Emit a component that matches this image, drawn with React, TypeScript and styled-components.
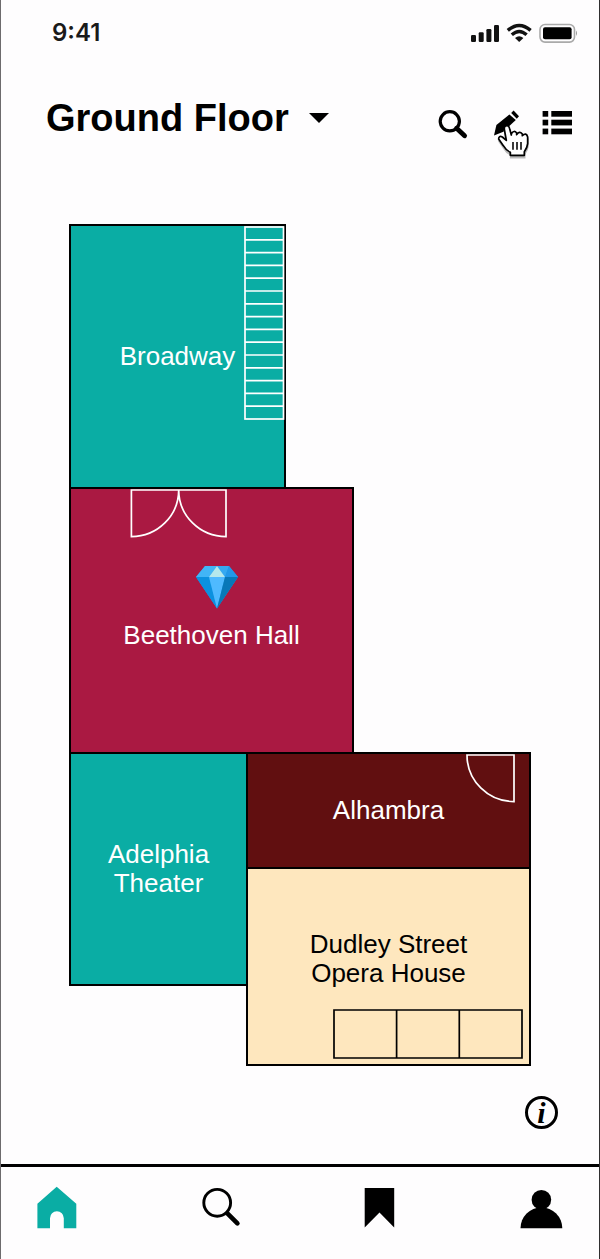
import React from "react";
import styled, { createGlobalStyle } from "styled-components";

const color = {
  paper: "#fefdfe",
  ink: "#000000",
  teal: "#0aada4",
  crimson: "#aa1942",
  maroon: "#610f10",
  cream: "#fee7be",
  white: "#ffffff",
};

const GlobalStyle = createGlobalStyle`
  *, *::before, *::after { box-sizing: border-box; }
  body {
    margin: 0;
    background: ${color.paper};
    color: ${color.ink};
    font-family: "Liberation Sans", Arial, Helvetica, sans-serif;
  }
  button, select { font: inherit; color: inherit; }
  svg { display: block; }
`;

const Screen = styled.div`
  min-height: 100vh;
  display: flex;
  flex-direction: column;
  border-left: 1px solid #6d6b6d;
  border-right: 1px solid #2f2f2f;
  background: ${color.paper};
`;

const StatusBar = styled.div`
  display: flex;
  justify-content: space-between;
  align-items: center;
  height: 66px;
  padding: 0 21px 0 51px;
`;

const Clock = styled.time`
  font-family: Inter, "Liberation Sans", sans-serif;
  font-size: 24px;
  font-weight: 600;
  line-height: 28px;
  color: #1a1a1a;
`;

const Header = styled.header`
  display: flex;
  justify-content: space-between;
  align-items: flex-start;
  padding: 37px 22px 82px 45px;
`;

const FloorPicker = styled.label`
  display: flex;
  align-items: center;
  gap: 20px;
`;

const FloorSelect = styled.select`
  appearance: none;
  margin: 0;
  padding: 0;
  border: 0;
  background: transparent;
  font-size: 38px;
  font-weight: 700;
  line-height: 30px;
  height: 30px;
  overflow: visible;
`;

const Tools = styled.div`
  display: flex;
  gap: 12px;
`;

const IconButton = styled.button<{ $size: number; $tint?: string }>`
  position: relative;
  width: ${(p) => p.$size}px;
  height: ${(p) => p.$size}px;
  padding: 0;
  border: 0;
  background: none;
  color: ${(p) => p.$tint ?? color.ink};
`;

const Pointer = styled.svg`
  position: absolute;
  left: 11px;
  top: 20px;
  pointer-events: none;
`;

const FloorPlan = styled.main`
  display: grid;
  grid-template-columns: 177fr 38fr 68fr 177fr;
  grid-template-rows: 263px 265px 115px 117px 80px;
  margin: 0 69px;
`;

const Room = styled.button<{ $area: string; $fill: string; $text?: string; $foot?: number }>`
  position: relative;
  grid-area: ${(p) => p.$area};
  display: flex;
  flex-direction: column;
  align-items: center;
  justify-content: center;
  gap: 12px;
  padding: 0 0 ${(p) => p.$foot ?? 0}px;
  border: 0;
  outline: 2px solid ${color.ink};
  outline-offset: -1px;
  background: ${(p) => p.$fill};
  color: ${(p) => p.$text ?? color.white};
  font-size: 26px;
  line-height: 29px;
`;

const Fixture = styled.svg<{ $top?: number; $bottom?: number; $left?: number; $right?: number }>`
  position: absolute;
  top: ${(p) => (p.$top === undefined ? "auto" : `${p.$top}px`)};
  bottom: ${(p) => (p.$bottom === undefined ? "auto" : `${p.$bottom}px`)};
  left: ${(p) => (p.$left === undefined ? "auto" : `${p.$left}px`)};
  right: ${(p) => (p.$right === undefined ? "auto" : `${p.$right}px`)};
  fill: none;
  stroke: currentColor;
  stroke-width: 1.7;
`;

const GemSlot = styled.span`
  padding-left: 11px;
`;

const InfoRow = styled.div`
  display: flex;
  justify-content: flex-end;
  padding: 31px 41px 35px;
`;

const InfoButton = styled.button`
  display: flex;
  align-items: center;
  justify-content: center;
  width: 33px;
  height: 33px;
  padding: 0;
  border: 3px solid ${color.ink};
  border-radius: 50%;
  background: none;
  font-family: "Liberation Serif", "Times New Roman", serif;
  font-size: 30px;
  font-style: italic;
  font-weight: 700;
  line-height: 27px;
`;

const TabBar = styled.nav`
  display: flex;
  justify-content: space-between;
  margin-top: auto;
  padding: 17px 34px 27px 32px;
  border-top: 3px solid ${color.ink};
`;

const StatusIcons = () => (
  <svg width="108" height="20" viewBox="0 0 108 20" aria-hidden="true">
    <g fill="#111">
      <rect x="1" y="12" width="5" height="7" rx="1.2" />
      <rect x="8.7" y="9.2" width="5" height="9.8" rx="1.2" />
      <rect x="16.4" y="6" width="5" height="13" rx="1.2" />
      <rect x="24" y="2" width="5" height="17" rx="1.2" />
    </g>
    <g fill="none" stroke="#111" strokeWidth="3.4">
      <path d="M37.8 7.4Q49.2-2.6 60.6 7.4" />
      <path d="M41.8 11.8Q49.2 5.2 56.6 11.8" />
    </g>
    <path d="M45 15Q49.2 11.4 53.4 15L49.2 19Z" fill="#111" />
    <rect x="70" y="1.5" width="34.5" height="17.6" rx="5" fill="none" stroke="#aaa" strokeWidth="1.6" />
    <rect x="73" y="4.3" width="28.6" height="12" rx="2" fill="#000" />
    <path d="M106 7.6Q108 10.3 106 13Z" fill="#999" />
  </svg>
);

const ToolSearch = () => (
  <svg width="40" height="40" viewBox="0 0 40 40" fill="none" stroke="currentColor">
    <circle cx="16.8" cy="18.3" r="9.6" strokeWidth="3.2" />
    <path d="M23.6 25.2L31.6 32.8" strokeWidth="4.8" strokeLinecap="round" />
  </svg>
);

const ToolPencil = () => (
  <svg width="40" height="40" viewBox="0 0 40 40" fill="currentColor">
    <path d="M9 32.4L11.4 21.9L24.4 11.4L30.8 17L18.4 28.7Z" />
    <path d="M26.2 10L28.6 7.6L34 13.2L31.8 15.8Z" />
  </svg>
);

const ToolList = () => (
  <svg width="40" height="40" viewBox="0 0 40 40" fill="currentColor">
    {[8, 16.7, 25.6].map((y) => (
      <React.Fragment key={y}>
        <rect x="5.6" y={y} width="5.6" height="5.7" />
        <rect x="14.3" y={y} width="20.7" height="5.7" />
      </React.Fragment>
    ))}
  </svg>
);

const HAND =
  "M31 52L25 19Q24 8 33 8Q39 8 41 17L46 36V32Q54 20 62 30V35Q70 22 79 33V38Q91 27 95 42V62Q94 74 85 86V97H43V88Q30 82 22 68L8 48Q8 37 19 42Z";

const HandPointer = () => (
  <Pointer width="34" height="38" viewBox="0 0 102 114" aria-hidden="true">
    <path d={HAND} transform="translate(1 7)" fill="#aaa" stroke="#bbb" strokeWidth="5" />
    <path d={HAND} fill="#fff" stroke="#000" strokeWidth="5.2" strokeLinejoin="round" />
    <path d="M51 57V80M63 57V80M75 57V80" stroke="#000" strokeWidth="4.6" />
  </Pointer>
);

const Gem = () => (
  <svg width="44" height="44" viewBox="0 0 44 44" aria-hidden="true">
    <path d="M10 1H34L43 12L22 43.5L1 12Z" fill="#1b9be8" />
    <path d="M10 1L22 1L14 12H1Z" fill="#42b5f6" />
    <path d="M22 1H34L30 12Z" fill="#35a9f1" />
    <path d="M34 1L43 12H30Z" fill="#2298e8" />
    <path d="M22 1L30 12H14Z" fill="#b5e8ec" />
    <path d="M1 12H14L22 43.5Z" fill="#0c91df" />
    <path d="M14 12H30L22 43.5Z" fill="#4fbaff" />
    <path d="M30 12H43L22 43.5Z" fill="#0878b8" />
  </svg>
);

const TabHome = () => (
  <svg width="48" height="48" viewBox="0 0 48 48" fill="currentColor">
    <path d="M23.7 2.8L43.3 19.8V44.3H30.8V34.2A6.9 6.9 0 0 0 17 34.2V44.3H4.4V19.8Z" />
  </svg>
);

const TabSearch = () => (
  <svg width="48" height="48" viewBox="0 0 48 48" fill="none" stroke="currentColor">
    <circle cx="23.2" cy="18.8" r="13.4" strokeWidth="2.9" />
    <path d="M33.4 29.4L43.4 39.4" strokeWidth="4.6" strokeLinecap="round" />
  </svg>
);

const TabBookmark = () => (
  <svg width="48" height="48" viewBox="0 0 48 48" fill="currentColor">
    <path d="M8.7 4H38.2V43.4L23.5 28.5L8.7 43.4Z" />
  </svg>
);

const TabProfile = () => (
  <svg width="48" height="48" viewBox="0 0 48 48" fill="currentColor">
    <circle cx="24.4" cy="15.7" r="9.8" />
    <path d="M3.5 44.3A20.9 21 0 0 1 45.3 44.3Z" />
  </svg>
);

const steps = Array.from({ length: 14 }, (_, i) => 1 + (i + 1) * 12.8);

export default function App() {
  return (
    <>
      <GlobalStyle />
      <Screen>
        <StatusBar>
          <Clock>9:41</Clock>
          <StatusIcons />
        </StatusBar>

        <Header>
          <FloorPicker>
            <FloorSelect aria-label="Floor">
              <option>Ground Floor</option>
            </FloorSelect>
            <svg width="20" height="10" viewBox="0 0 20 10" aria-hidden="true">
              <path d="M0 0H20L10 10Z" />
            </svg>
          </FloorPicker>
          <Tools>
            <IconButton $size={40} aria-label="Search">
              <ToolSearch />
            </IconButton>
            <IconButton $size={40} aria-label="Edit">
              <ToolPencil />
              <HandPointer />
            </IconButton>
            <IconButton $size={40} aria-label="List">
              <ToolList />
            </IconButton>
          </Tools>
        </Header>

        <FloorPlan>
          <Room $area="1 / 1 / 2 / 3" $fill={color.teal}>
            Broadway
            <Fixture $top={1} $right={0} width="41" height="194" viewBox="0 0 41 194">
              <rect x="1" y="1" width="38.5" height="192" />
              {steps.map((y) => (
                <path key={y} d={`M1 ${y}H39.5`} />
              ))}
            </Fixture>
          </Room>
          <Room $area="2 / 1 / 3 / 4" $fill={color.crimson} $foot={26}>
            <GemSlot>
              <Gem />
            </GemSlot>
            Beethoven Hall
            <Fixture $top={1} $left={60} width="97" height="49" viewBox="0 0 97 49">
              <path d="M1.4 1H96V47.6A47.3 46.6 0 0 1 48.7 1A47.3 46.6 0 0 1 1.4 47.6Z" />
            </Fixture>
          </Room>
          <Room $area="3 / 1 / 5 / 2" $fill={color.teal}>
            <span>
              Adelphia
              <br />
              Theater
            </span>
          </Room>
          <Room $area="3 / 2 / 4 / 5" $fill={color.maroon}>
            Alhambra
            <Fixture $top={1} $right={15} width="49" height="49" viewBox="0 0 49 49">
              <path d="M1 1H48V47.6A47 46.6 0 0 1 1 1Z" />
            </Fixture>
          </Room>
          <Room $area="4 / 2 / 6 / 5" $fill={color.cream} $text={color.ink} $foot={16}>
            <span>
              Dudley Street
              <br />
              Opera House
            </span>
            <Fixture $bottom={6} $right={7} width="190" height="50" viewBox="0 0 190 50">
              <path d="M1 1H189V49H1ZM63.6 1V49M126.3 1V49" />
            </Fixture>
          </Room>
        </FloorPlan>

        <InfoRow>
          <InfoButton aria-label="Information">i</InfoButton>
        </InfoRow>

        <TabBar>
          <IconButton $size={48} $tint={color.teal} aria-label="Home">
            <TabHome />
          </IconButton>
          <IconButton $size={48} aria-label="Search">
            <TabSearch />
          </IconButton>
          <IconButton $size={48} aria-label="Bookmarks">
            <TabBookmark />
          </IconButton>
          <IconButton $size={48} aria-label="Profile">
            <TabProfile />
          </IconButton>
        </TabBar>
      </Screen>
    </>
  );
}
